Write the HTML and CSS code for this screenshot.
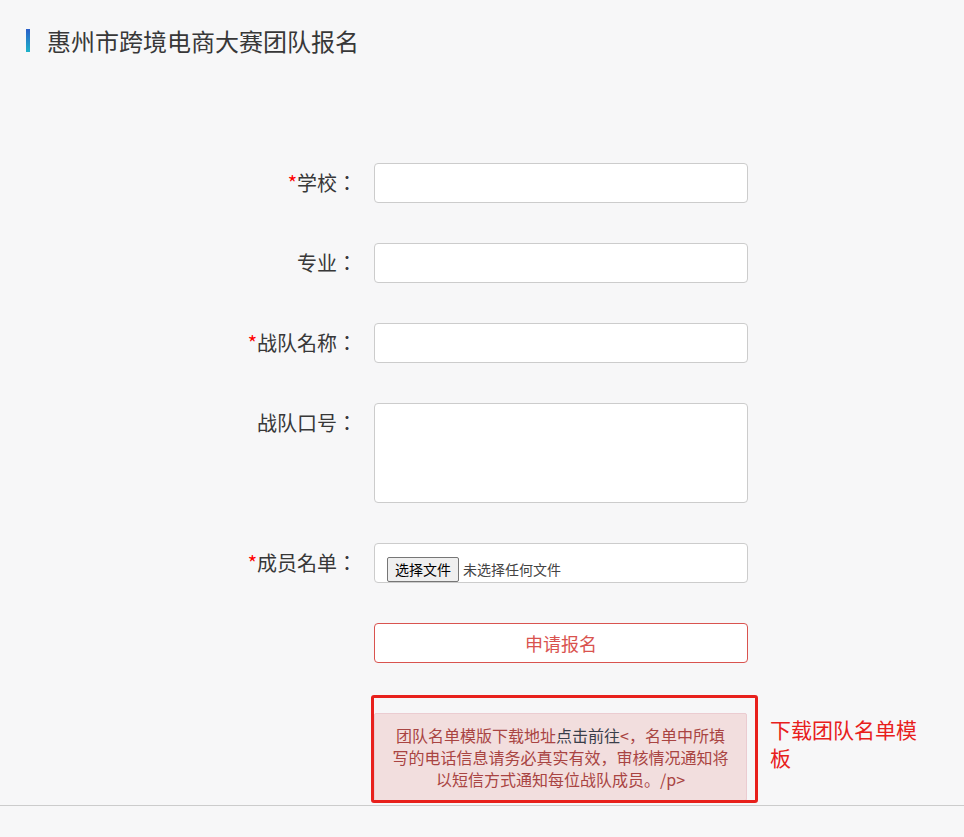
FILE: index.html
```html
<!DOCTYPE HTML>
<html>

<head>
  <meta charset="utf-8">
  <link rel="stylesheet" href="styles.css">
</head>

<body>

  <div class="title-bar">
    <span class="title-mark"></span>
    <h2 class="title">惠州市跨境电商大赛团队报名</h2>
  </div>

  <form class="sign-form">
    <label class="form-label"><i class="req">*</i>学校：</label>
    <input class="form-input" type="text">

    <label class="form-label">专业：</label>
    <input class="form-input" type="text">

    <label class="form-label"><i class="req">*</i>战队名称：</label>
    <input class="form-input" type="text">

    <label class="form-label">战队口号：</label>
    <textarea class="form-input form-textarea"></textarea>

    <label class="form-label"><i class="req">*</i>成员名单：</label>
    <div class="form-input file-box">
      <label class="file-btn" for="member-file">选择文件</label>
      <span class="file-name">未选择任何文件</span>
      <input class="file-hidden" id="member-file" type="file">
    </div>

    <span></span>
    <button class="submit-btn" type="button">申请报名</button>

    <span></span>
    <div class="notice-wrap">
      <div class="notice">团队名单模版下载地址<a class="notice-link" href="#">点击前往</a>&lt;，名单中所填写的电话信息请务必真实有效，审核情况通知将以短信方式通知每位战队成员。/p&gt;</div>
      <span class="mark-box"></span>
      <span class="mark-text">下载团队名单模板</span>
    </div>
  </form>

  <div class="footer-line"></div>

</body>

</html>
```

FILE: styles.css
```css
body {
  margin: 0;
  background-color: #f7f7f8;
  font-family: "Noto Sans CJK SC", "Liberation Sans", sans-serif;
  color: #333;
}

.title-bar {
  display: flex;
  align-items: center;
  padding: 29px 0 0 26px;
}

.title-mark {
  width: 4px;
  height: 23px;
  background: linear-gradient(#2b5fc9, #1eb3c9);
}

.title {
  margin: 0 0 0 17px;
  font-size: 24px;
  font-weight: normal;
  line-height: 23px;
  color: #383838;
}

.sign-form {
  display: grid;
  grid-template-columns: 357px 374px;
  column-gap: 17px;
  row-gap: 40px;
  margin-top: 111px;
}

.form-label {
  text-align: right;
  font-family: "Noto Sans CJK TC", "Noto Sans CJK SC", sans-serif;
  font-size: 20px;
  line-height: 40px;
  white-space: nowrap;
  color: #383838;
}

.req {
  font-style: normal;
  color: #f00;
}

.form-input {
  box-sizing: border-box;
  height: 40px;
  margin: 0;
  padding: 6px 12px;
  border: 1px solid #ccc;
  border-radius: 4px;
  background-color: #fff;
  font-family: inherit;
  font-size: 16px;
}

.form-input:focus {
  outline: none;
  border-color: #66afe9;
}

.form-textarea {
  height: 100px;
  resize: none;
}

.file-box {
  display: flex;
  align-items: flex-start;
  padding: 13px 12px 0;
  overflow: hidden;
}

.file-btn {
  box-sizing: border-box;
  height: 25px;
  padding: 0 7px;
  border: 1px solid #767676;
  border-radius: 2px;
  background-color: #efefef;
  font-size: 14px;
  line-height: 23px;
  color: #000;
}

.file-name {
  margin-left: 4px;
  font-size: 14px;
  line-height: 25px;
  color: #444;
}

.file-hidden {
  display: none;
}

.submit-btn {
  height: 40px;
  border: 1px solid #d9534f;
  border-radius: 4px;
  background-color: #fff;
  font-family: inherit;
  font-size: 18px;
  color: #d9534f;
  cursor: pointer;
}

.notice-wrap {
  position: relative;
  margin-top: 10px;
}

.notice {
  margin-right: 1px;
  padding: 10px 15px;
  border: 1px solid #ebccd1;
  border-radius: 2px;
  background-color: #f2dede;
  font-size: 16px;
  line-height: 22px;
  text-align: center;
  color: #a94442;
}

.notice-link {
  color: #3a3f4a;
  text-decoration: none;
}

/* красная рамка-пометка поверх подсказки */
.mark-box {
  position: absolute;
  left: -3px;
  top: -18px;
  right: -10px;
  bottom: -2px;
  border: 3px solid #e8201c;
  border-radius: 3px;
}

.mark-text {
  position: absolute;
  left: 396px;
  top: 2px;
  width: 155px;
  font-size: 21px;
  line-height: 28px;
  color: #e8201c;
}

.footer-line {
  margin-top: 4px;
  height: 1px;
  background-color: #ccc;
}
```
